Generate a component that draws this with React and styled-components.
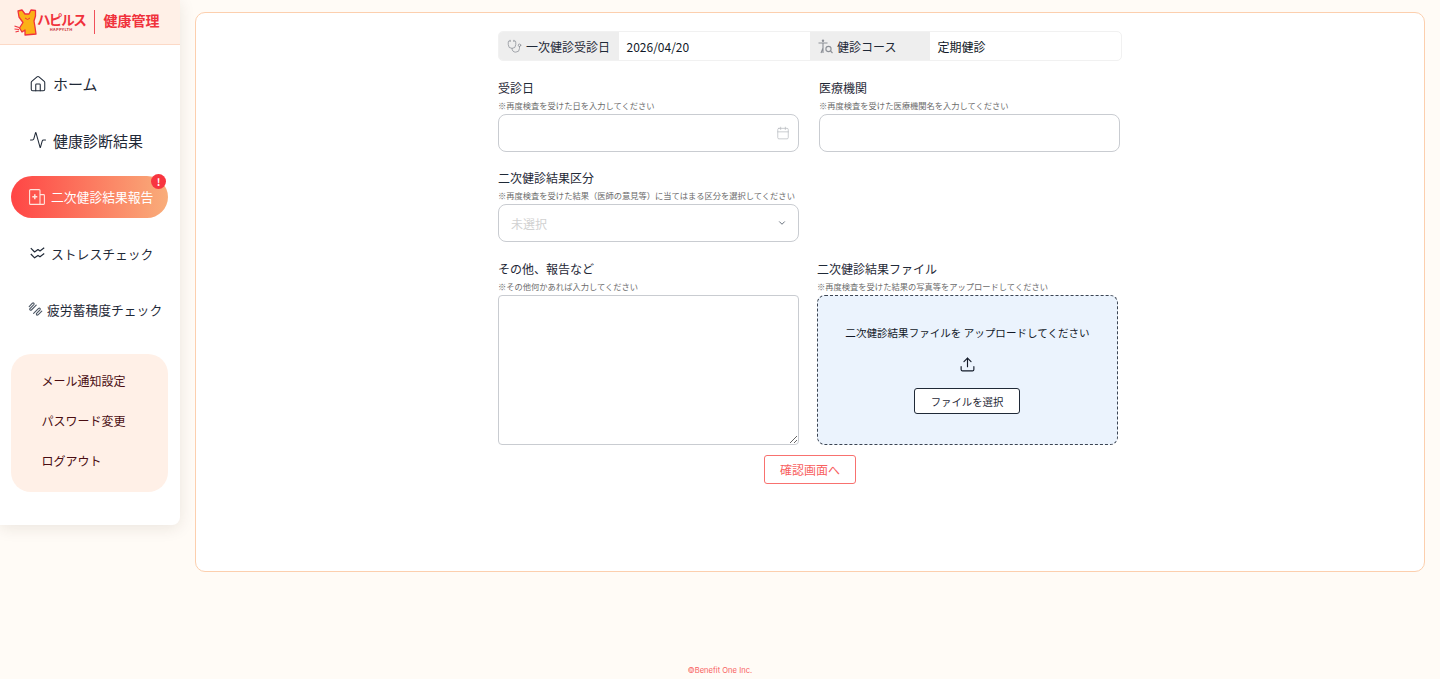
import React from 'react';
import styled, { createGlobalStyle } from 'styled-components';
import { House, Activity, Stethoscope, Calendar, ChevronDown, Upload } from 'lucide-react';

const Global = createGlobalStyle`
  html, body { margin: 0; padding: 0; }
  body {
    background: #fffbf6;
    color: #1f2937;
    font-family: "Noto Sans CJK JP", "Noto Sans", sans-serif;
  }
  * { box-sizing: border-box; }
`;

const Page = styled.div`
  height: 679px;
  overflow: hidden;
  display: flex;
  flex-direction: column;
`;
const Top = styled.div`
  display: flex;
  align-items: flex-start;
`;
const Sidebar = styled.aside`
  width: 180px;
  height: 525px;
  background: #fff;
  border-radius: 0 0 8px 0;
  box-shadow: 0 3px 16px rgba(60, 40, 20, 0.1);
  flex: none;
`;
const LogoBar = styled.div`
  height: 45px;
  background: #fff0e7;
  border-bottom: 1px solid #fcd9c6;
  display: flex;
  align-items: center;
  padding-left: 14px;
`;
const LogoWords = styled.div`
  display: flex;
  flex-direction: column;
  align-items: center;
  margin-bottom: 1px;
`;
const LogoName = styled.span`
  font-size: 13.5px;
  line-height: 15px;
  font-weight: 700;
  letter-spacing: -1.4px;
  color: #f0323c;
`;
const LogoSmall = styled.span`
  font-size: 4px;
  line-height: 5px;
  font-weight: 700;
  color: #c9353c;
  letter-spacing: 0.3px;
`;
const LogoRule = styled.span`
  width: 1px;
  height: 24px;
  background: #f0505a;
  margin: 0 8px 0 9px;
`;
const LogoTitle = styled.span`
  font-size: 14px;
  line-height: 18px;
  margin-bottom: 4px;
  font-weight: 700;
  color: #f0323c;
`;
const Nav = styled.nav`
  display: flex;
  flex-direction: column;
  padding: 17.5px 12px 0 11px;
`;
const NavItem = styled.a`
  position: relative;
  height: 42px;
  margin-bottom: 14.5px;
  border-radius: 21px;
  display: flex;
  align-items: center;
  gap: ${p => p.$gap || 6}px;
  padding-left: ${p => p.$pad || 18}px;
  font-size: ${p => p.$size || 12.8}px;
  color: ${p => (p.$active ? '#fff' : '#1f2937')};
  background: ${p => (p.$active ? 'linear-gradient(90deg, #ff4545 0%, #f9ad7a 100%)' : 'transparent')};
  svg { flex: none; }
`;
const Badge = styled.span`
  position: absolute;
  top: -2px;
  right: 2px;
  width: 15px;
  height: 15px;
  border-radius: 50%;
  background: #f8353f;
  color: #fff;
  font-size: 10px;
  font-weight: 700;
  line-height: 15px;
  text-align: center;
`;
const SubMenu = styled.div`
  margin: 9px 12px 0 11px;
  height: 138px;
  padding: 7px 0 0 30.5px;
  background: #fff0e7;
  border-radius: 20px;
`;
const SubItem = styled.a`
  display: block;
  height: 40px;
  line-height: 40px;
  font-size: 12px;
  color: #4a0d12;
`;
const Card = styled.main`
  width: 1230px;
  height: 560px;
  margin: 12px 0 0 15px;
  padding: 18px 0 0 302px;
  background: #fff;
  border: 1px solid #fccfae;
  border-radius: 10px;
  flex: none;
`;
const Form = styled.div`
  width: 624px;
`;
const InfoRow = styled.div`
  display: grid;
  grid-template-columns: 120px 191px 120px 191px;
  height: 30px;
  border: 1px solid #f1f1f1;
  border-radius: 5px;
  overflow: hidden;
`;
const InfoLabel = styled.div`
  background: #eeeeee;
  display: flex;
  align-items: center;
  gap: 4px;
  padding-left: 8px;
  font-size: 12px;
  color: #1f2937;
`;
const InfoValue = styled.div`
  display: flex;
  align-items: center;
  padding-left: 7.5px;
  font-size: 12px;
  color: #111827;
`;
const Grid = styled.div`
  display: grid;
  grid-template-columns: 301px 301px;
  column-gap: ${p => p.$gap || 20}px;
  margin-top: ${p => p.$top}px;
`;
const Label = styled.div`
  font-size: 12px;
  line-height: 18px;
  color: #1f2937;
`;
const Hint = styled.div`
  font-size: 8.28px;
  line-height: 12px;
  margin-top: 2px;
  margin-bottom: 3px;
  color: #6b6b6b;
  white-space: nowrap;
`;
const Box = styled.div`
  height: ${p => p.$h || 38}px;
  border: 1px solid #c9ccd1;
  border-radius: 8px;
  background: #fff;
  display: flex;
  align-items: center;
  justify-content: space-between;
  padding: 0 ${p => p.$right || 11}px 0 12px;
  color: #9ca3af;
`;
const Placeholder = styled.span`
  font-size: 12px;
  color: #d1d1d1;
`;
const TextArea = styled.textarea`
  display: block;
  width: 301px;
  height: 150px;
  border: 1px solid #c9ccd1;
  border-radius: 4px;
  background: #fff;
  outline: none;
`;
const Drop = styled.div`
  height: 150px;
  background: #ebf3fd;
  border: 1px dashed #3b4452;
  border-radius: 8px;
  display: flex;
  flex-direction: column;
  align-items: center;
  padding-top: 29px;
  color: #111827;
`;
const DropText = styled.div`
  font-size: 10.56px;
  line-height: 16px;
  margin-bottom: 15px;
`;
const FileButton = styled.button`
  width: 106px;
  height: 26px;
  margin-top: 15px;
  margin-left: -1px;
  border: 1px solid #1f2937;
  border-radius: 3px;
  background: #fff;
  color: #1f2937;
  font: 10.4px "Noto Sans CJK JP", sans-serif;
`;
const Actions = styled.div`
  display: flex;
  justify-content: center;
  margin-top: 10px;
`;
const Confirm = styled.button`
  width: 92px;
  height: 29px;
  border: 1px solid #f8716f;
  border-radius: 3px;
  background: #fff;
  color: #f8615f;
  font: 12px "Noto Sans CJK JP", sans-serif;
`;
const Footer = styled.footer`
  margin-top: 94px;
  text-align: center;
  font-family: Inter, sans-serif;
  font-size: 7.6px;
  line-height: 10px;
  color: #f8615f;
`;

const Mascot = () => (
  <svg width="23" height="27" viewBox="0 0 23 27">
    <path d="M4 2 L8 1 L11 5 L15 5 L17 1 L21.5 1.5 L21.5 7 L20 12 L21 18 L22 25 L11 26 L11 21 L8 23 L5.5 19 L9 13.5 L5 8 Z" fill="#fbb117" stroke="#f0323c" strokeWidth="1.3" strokeLinejoin="round" />
    <path d="M11 9 Q13.5 12 16 9" fill="none" stroke="#f0323c" strokeWidth="1" />
    <path d="M0.5 17 L5 18.5 M0.5 20 L5 20.5 M1.5 23 L5 22" stroke="#f0323c" strokeWidth="1.2" />
  </svg>
);

const ReportIcon = () => (
  <svg width="16" height="16" viewBox="0 0 16 16" fill="none" stroke="#ffe4dc" strokeWidth="1.1" strokeLinejoin="round">
    <path d="M0.6 1.6 Q0.6 0.6 1.6 0.6 H10 Q11 0.6 11 1.6 V15.4 H1.6 Q0.6 15.4 0.6 14.4 Z" />
    <path d="M11 5.6 H14.6 Q15.4 5.6 15.4 6.4 V14.6 Q15.4 15.4 14.6 15.4 H11" />
    <path d="M5.8 5.2 V10.2 M3.3 7.7 H8.3" strokeWidth="1.5" />
  </svg>
);

const StressIcon = () => (
  <svg width="15" height="12" viewBox="0 0 15 12" fill="none" stroke="#1f2937" strokeWidth="1.2" strokeLinejoin="round">
    <path d="M0.8 1.2 L4.6 5 L8 2.6 L10 4 L14.2 0.8" />
    <path d="M0.8 7 L4.6 10.8 L8 8.4 L10 9.8 L14.2 6.6" />
  </svg>
);

const FatigueIcon = () => (
  <svg width="15" height="15" viewBox="0 0 15 15" fill="none" stroke="#4b5563" strokeWidth="1.1" strokeLinecap="round" strokeLinejoin="round">
    <path d="M1.2 4.6 L4.4 1.2 C5.4 0.4 6.6 1.6 5.8 2.6 L2 6.6 C1.2 7.6 2.4 8.8 3.4 8 L8.2 3.2" />
    <path d="M5.6 11.4 L10.6 6.4 C11.6 5.6 12.8 6.8 12 7.8 L8.6 11.4 C7.8 12.4 9 13.6 10 12.8 L13.8 9.2" />
  </svg>
);

const BodyIcon = () => (
  <svg width="15" height="15" viewBox="0 0 15 15" fill="none" stroke="#8b8f96" strokeWidth="1.1">
    <circle cx="5" cy="1.8" r="1.2" fill="#8b8f96" stroke="none" />
    <path d="M0.5 4 H9.5 M5 4 V14 M5 9 L3 14" />
    <circle cx="10.5" cy="10" r="2.6" />
    <path d="M12.5 12 L14.5 14" />
  </svg>
);

export default function App() {
  return (
    <Page>
      <Global />
      <Top>
        <Sidebar>
          <LogoBar>
            <Mascot />
            <LogoWords>
              <LogoName>ハピルス</LogoName>
              <LogoSmall>HAPPYLTH</LogoSmall>
            </LogoWords>
            <LogoRule />
            <LogoTitle>健康管理</LogoTitle>
          </LogoBar>
          <Nav>
            <NavItem $size={15} $gap={6}><House size={18} strokeWidth={1.4} />ホーム</NavItem>
            <NavItem $size={15} $gap={6}><Activity size={18} strokeWidth={1.4} />健康診断結果</NavItem>
            <NavItem $active $gap={6}><ReportIcon />二次健診結果報告<Badge>!</Badge></NavItem>
            <NavItem $pad={19} $gap={6}><StressIcon />ストレスチェック</NavItem>
            <NavItem $pad={17} $gap={4}><FatigueIcon />疲労蓄積度チェック</NavItem>
          </Nav>
          <SubMenu>
            <SubItem>メール通知設定</SubItem>
            <SubItem>パスワード変更</SubItem>
            <SubItem>ログアウト</SubItem>
          </SubMenu>
        </Sidebar>
        <Card>
          <Form>
            <InfoRow>
              <InfoLabel><Stethoscope size={15} strokeWidth={1.2} color="#8b8f96" />一次健診受診日</InfoLabel>
              <InfoValue>2026/04/20</InfoValue>
              <InfoLabel><BodyIcon />健診コース</InfoLabel>
              <InfoValue>定期健診</InfoValue>
            </InfoRow>
            <Grid $top={18}>
              <div>
                <Label>受診日</Label>
                <Hint>※再度検査を受けた日を入力してください</Hint>
                <Box $right={8}><span /><Calendar size={14} strokeWidth={1.2} color="#b5b8bd" /></Box>
              </div>
              <div>
                <Label>医療機関</Label>
                <Hint>※再度検査を受けた医療機関名を入力してください</Hint>
                <Box />
              </div>
            </Grid>
            <Grid $top={17}>
              <div>
                <Label>二次健診結果区分</Label>
                <Hint>※再度検査を受けた結果（医師の意見等）に当てはまる区分を選択してください</Hint>
                <Box><Placeholder>未選択</Placeholder><ChevronDown size={10} strokeWidth={2} color="#4b5563" /></Box>
              </div>
            </Grid>
            <Grid $top={18} $gap={18}>
              <div>
                <Label>その他、報告など</Label>
                <Hint>※その他何かあれば入力してください</Hint>
                <TextArea />
              </div>
              <div>
                <Label>二次健診結果ファイル</Label>
                <Hint>※再度検査を受けた結果の写真等をアップロードしてください</Hint>
                <Drop>
                  <DropText>二次健診結果ファイルを アップロードしてください</DropText>
                  <Upload size={17} strokeWidth={1.6} color="#111827" />
                  <FileButton>ファイルを選択</FileButton>
                </Drop>
              </div>
            </Grid>
            <Actions><Confirm>確認画面へ</Confirm></Actions>
          </Form>
        </Card>
      </Top>
      <Footer>©Benefit One Inc.</Footer>
    </Page>
  );
}
